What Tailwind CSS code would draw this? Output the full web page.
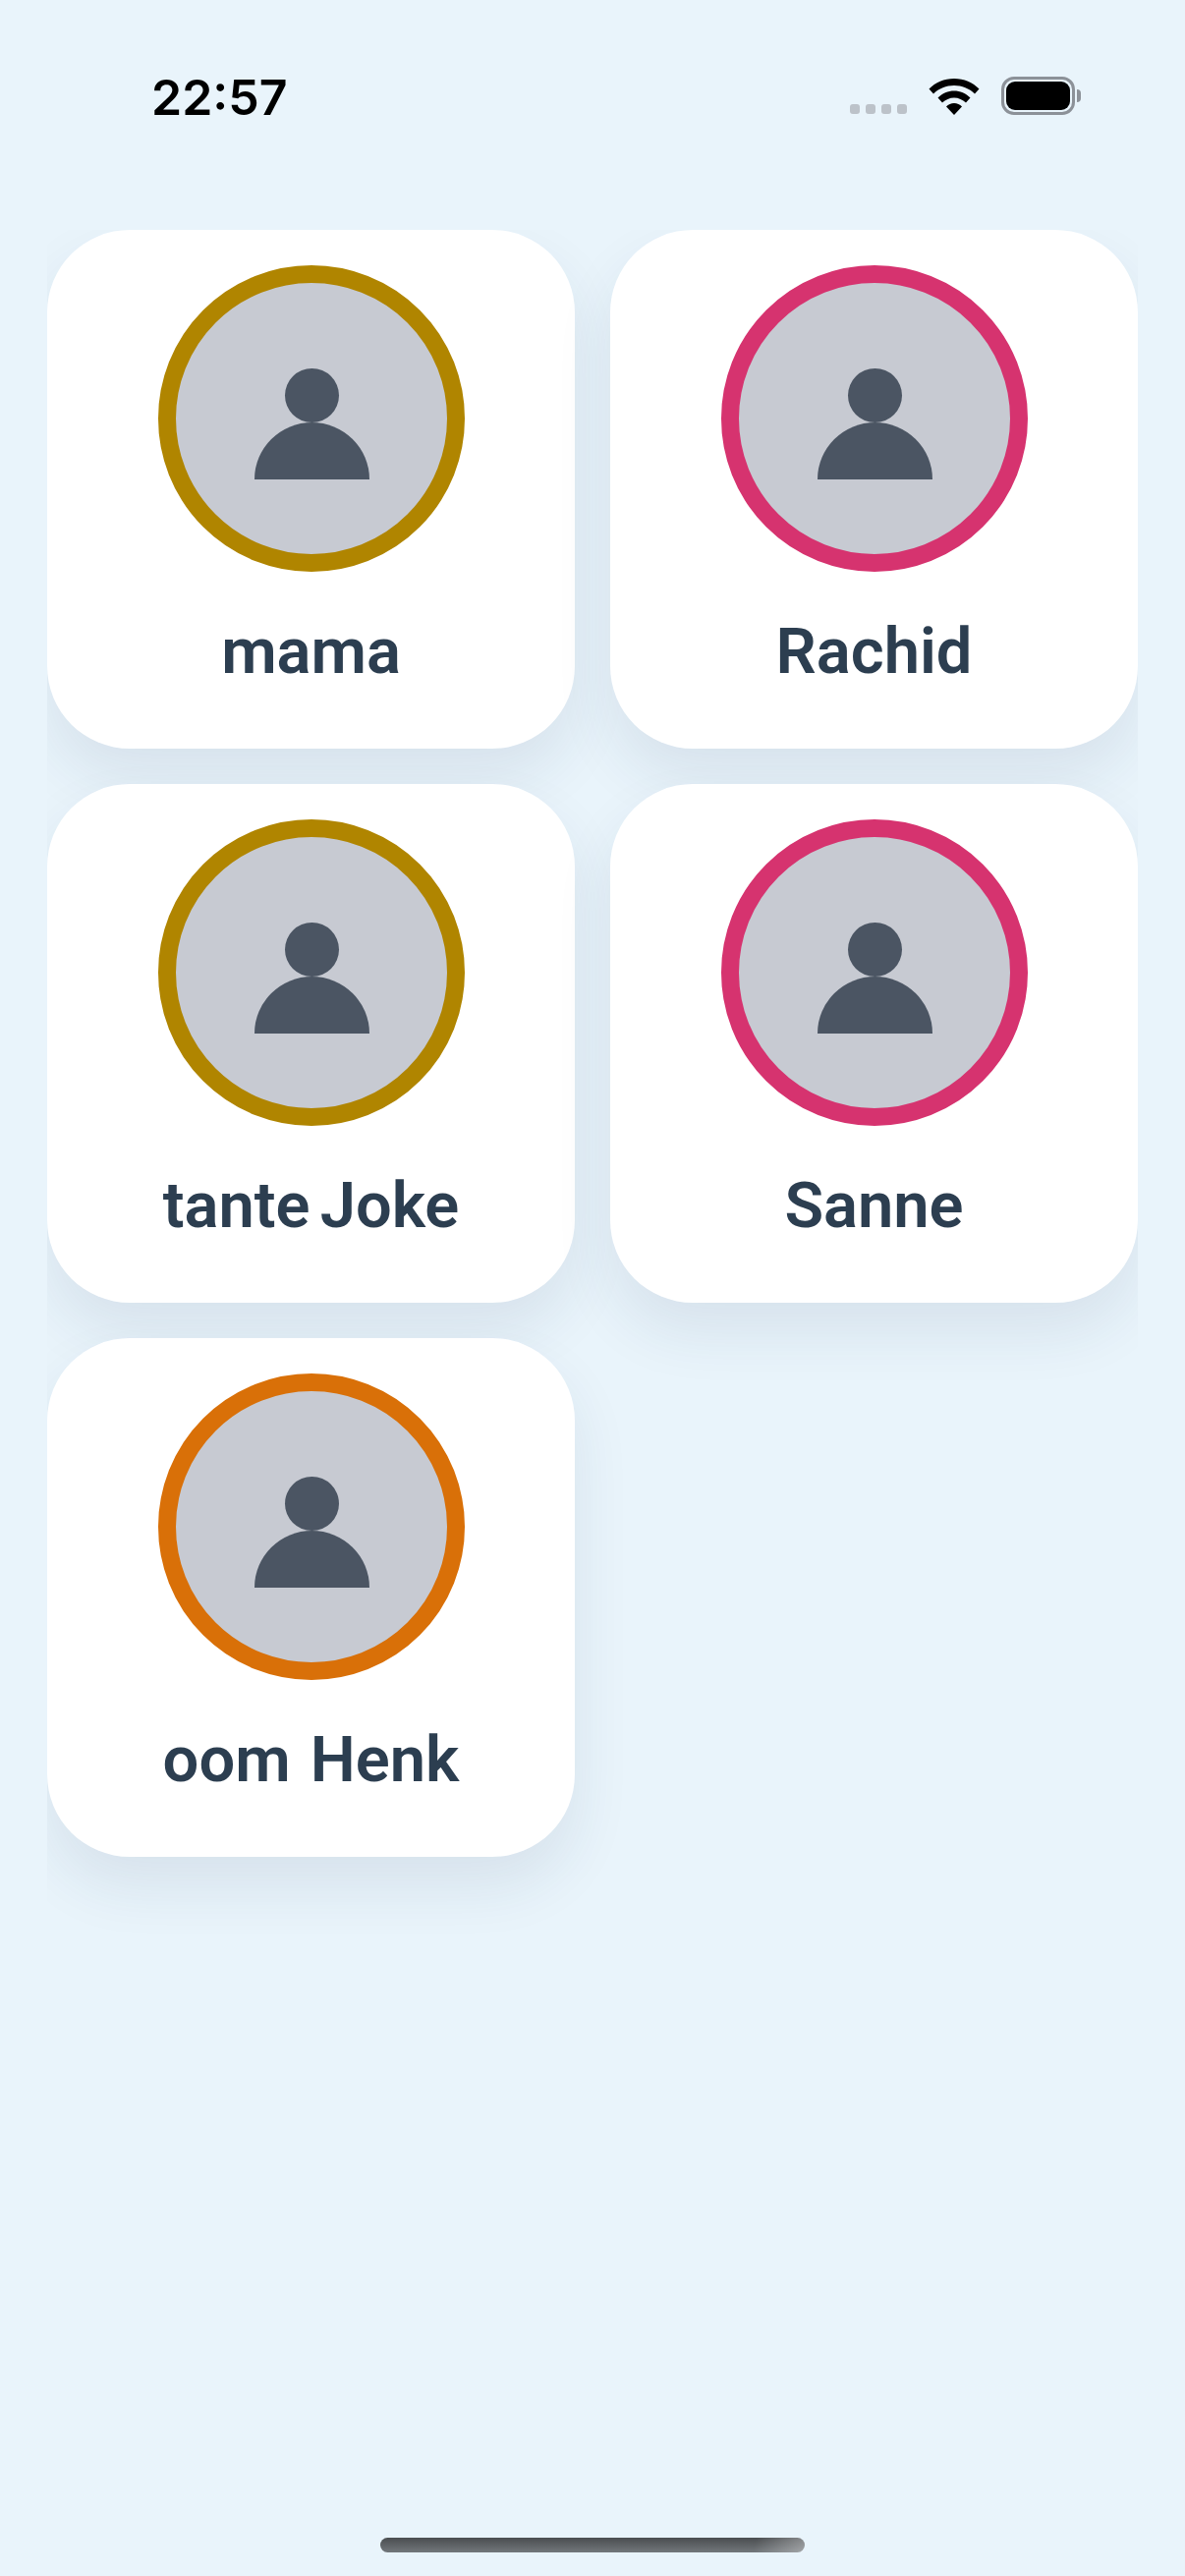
<!DOCTYPE html>
<html>
<head>
<meta charset="utf-8">
<script src="https://cdn.jsdelivr.net/npm/@tailwindcss/browser@4"></script>
</head>
<body class="m-0 bg-[#e9f4fb]">
<main class="relative flex flex-col w-[1206px] h-[2622px] bg-[#e9f4fb] overflow-hidden font-['Roboto',sans-serif]">
  <header class="flex items-start justify-between h-[234px] pl-[154px] pr-[106px] pt-[70px]">
    <span class="font-['Inter',sans-serif] font-semibold text-[50px] leading-[58px] text-black">22:57</span>
    <div class="flex items-end gap-[22px] pt-2">
      <div class="flex gap-1.5 pb-[1px]">
        <span class="w-[10px] h-[10px] rounded-[3px] bg-[#bcc2c9]"></span>
        <span class="w-[10px] h-[10px] rounded-[3px] bg-[#bcc2c9]"></span>
        <span class="w-[10px] h-[10px] rounded-[3px] bg-[#bcc2c9]"></span>
        <span class="w-[10px] h-[10px] rounded-[3px] bg-[#bcc2c9]"></span>
      </div>
      <svg class="w-[52px] h-[38px]" viewBox="0 0 52 38" fill="#000"><path d="M0.500 11.500C7 5 16 1 26 1s19 4 25.500 10.500L47 16.500C41.500 11 34 8 26 8S10.500 11 5 16.500Z"/><path d="M9.500 20.500C14 16 20 13.500 26 13.500S38 16 42.500 20.500L38 25.500C34.800 22.500 30.500 20.500 26 20.500S17.200 22.500 14 25.500Z"/><path d="M18 29.500C20 27.500 23 26 26 26s6 1.500 8 3.500L26 38Z"/></svg>
      <div class="flex items-center">
        <div class="flex w-[75px] h-[39px] p-[2px] rounded-[13px] border-[3px] border-[#8c9198]">
          <div class="w-full h-full rounded-[9px] bg-black"></div>
        </div>
        <div class="w-[4px] h-[13px] ml-[2px] rounded-r-[4px] bg-[#8c9198]"></div>
      </div>
    </div>
  </header>

  <section class="ml-12 w-[1110px] overflow-hidden pb-[150px]">
    <div class="grid grid-cols-2 gap-9">
      <article class="flex flex-col items-center h-[528px] pt-9 rounded-[84px] bg-white shadow-[0_30px_60px_rgba(30,60,90,0.09)]">
        <div class="flex items-center justify-center w-[312px] h-[312px] rounded-full border-[18px] border-[#b08500] bg-[#c7cad2]">
          <svg class="w-[117px] h-[113px] mt-[11px] ml-[1px]" viewBox="0 0 117 113" fill="#4b5563"><circle cx="58.500" cy="27.500" r="27.500"/><path d="M0 113A58.500 58 0 0 1 117 113Z"/></svg>
        </div>
        <h2 class="mt-[41px] text-[65px] leading-[80px] font-semibold text-[#2c3e50]">mama</h2>
      </article>
      <article class="flex flex-col items-center h-[528px] pt-9 rounded-[84px] bg-white shadow-[0_30px_60px_rgba(30,60,90,0.09)]">
        <div class="flex items-center justify-center w-[312px] h-[312px] rounded-full border-[18px] border-[#d6336f] bg-[#c7cad2]">
          <svg class="w-[117px] h-[113px] mt-[11px] ml-[1px]" viewBox="0 0 117 113" fill="#4b5563"><circle cx="58.500" cy="27.500" r="27.500"/><path d="M0 113A58.500 58 0 0 1 117 113Z"/></svg>
        </div>
        <h2 class="mt-[41px] text-[65px] leading-[80px] font-semibold text-[#2c3e50]">Rachid</h2>
      </article>
      <article class="flex flex-col items-center h-[528px] pt-9 rounded-[84px] bg-white shadow-[0_30px_60px_rgba(30,60,90,0.09)]">
        <div class="flex items-center justify-center w-[312px] h-[312px] rounded-full border-[18px] border-[#b08500] bg-[#c7cad2]">
          <svg class="w-[117px] h-[113px] mt-[11px] ml-[1px]" viewBox="0 0 117 113" fill="#4b5563"><circle cx="58.500" cy="27.500" r="27.500"/><path d="M0 113A58.500 58 0 0 1 117 113Z"/></svg>
        </div>
        <h2 class="mt-[41px] text-[65px] leading-[80px] font-semibold text-[#2c3e50] [word-spacing:-6px]">tante Joke</h2>
      </article>
      <article class="flex flex-col items-center h-[528px] pt-9 rounded-[84px] bg-white shadow-[0_30px_60px_rgba(30,60,90,0.09)]">
        <div class="flex items-center justify-center w-[312px] h-[312px] rounded-full border-[18px] border-[#d6336f] bg-[#c7cad2]">
          <svg class="w-[117px] h-[113px] mt-[11px] ml-[1px]" viewBox="0 0 117 113" fill="#4b5563"><circle cx="58.500" cy="27.500" r="27.500"/><path d="M0 113A58.500 58 0 0 1 117 113Z"/></svg>
        </div>
        <h2 class="mt-[41px] text-[65px] leading-[80px] font-semibold text-[#2c3e50]">Sanne</h2>
      </article>
      <article class="flex flex-col items-center h-[528px] pt-9 rounded-[84px] bg-white shadow-[0_30px_60px_rgba(30,60,90,0.09)]">
        <div class="flex items-center justify-center w-[312px] h-[312px] rounded-full border-[18px] border-[#d97008] bg-[#c7cad2]">
          <svg class="w-[117px] h-[113px] mt-[11px] ml-[1px]" viewBox="0 0 117 113" fill="#4b5563"><circle cx="58.500" cy="27.500" r="27.500"/><path d="M0 113A58.500 58 0 0 1 117 113Z"/></svg>
        </div>
        <h2 class="mt-[41px] text-[65px] leading-[80px] font-semibold text-[#2c3e50] [word-spacing:4px]">oom Henk</h2>
      </article>
    </div>
  </section>

  <div class="absolute left-[387px] top-[2583px] w-[432px] h-[15px] rounded-full bg-[linear-gradient(100deg,transparent_88%,rgba(255,255,255,0.35)),linear-gradient(180deg,#4a4d50,#72777b)]"></div>
</main>
</body>
</html>
